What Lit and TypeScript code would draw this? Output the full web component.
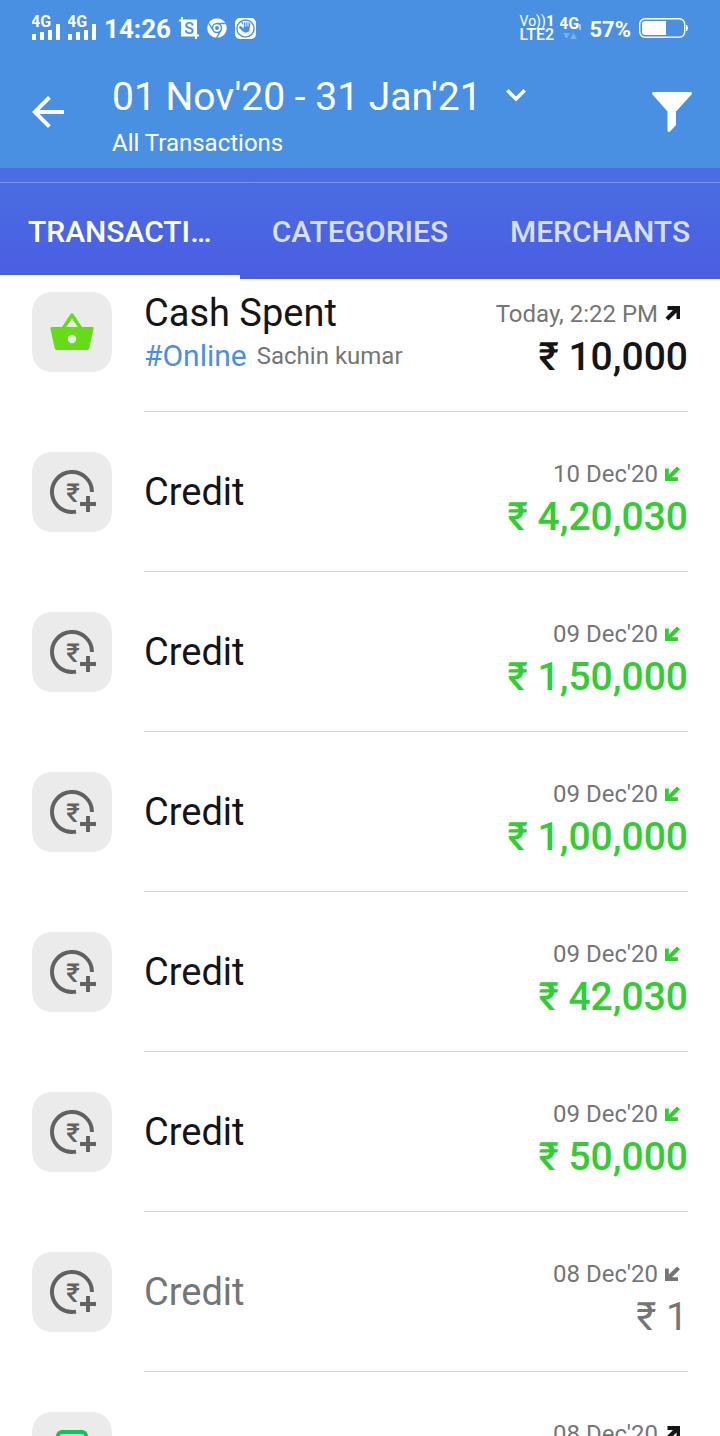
import { LitElement, html, css, svg, nothing } from "lit";
import { customElement, property, state } from "lit/decorators.js";
import { classMap } from "lit/directives/class-map.js";

type Direction = "in" | "out";
type Tone = "spent" | "credit" | "muted";
type Glyph = "basket" | "credit" | "card";

interface Transaction {
  icon: Glyph;
  title?: string;
  tag?: string;
  person?: string;
  date: string;
  amount?: string;
  direction: Direction;
  tone: Tone;
}

const TRANSACTIONS: Transaction[] = [
  { icon: "basket", title: "Cash Spent", tag: "#Online", person: "Sachin kumar", date: "Today, 2:22 PM", amount: "₹ 10,000", direction: "out", tone: "spent" },
  { icon: "credit", title: "Credit", date: "10 Dec'20", amount: "₹ 4,20,030", direction: "in", tone: "credit" },
  { icon: "credit", title: "Credit", date: "09 Dec'20", amount: "₹ 1,50,000", direction: "in", tone: "credit" },
  { icon: "credit", title: "Credit", date: "09 Dec'20", amount: "₹ 1,00,000", direction: "in", tone: "credit" },
  { icon: "credit", title: "Credit", date: "09 Dec'20", amount: "₹ 42,030", direction: "in", tone: "credit" },
  { icon: "credit", title: "Credit", date: "09 Dec'20", amount: "₹ 50,000", direction: "in", tone: "credit" },
  { icon: "credit", title: "Credit", date: "08 Dec'20", amount: "₹ 1", direction: "in", tone: "muted" },
  { icon: "card", date: "08 Dec'20", direction: "out", tone: "spent" },
];

const GLYPHS = {
  basket: svg`
    <path fill="#64dd17" fill-rule="evenodd" d="M19.5 35H30L38.4 22.2Q40 20.2 41.6 22.2L50 35H60.5Q62 35 61.6 36.6L57.4 56Q56.8 58 55 58H25Q23.2 58 22.6 56L18.4 36.6Q18 35 19.5 35ZM34.2 35H45.8L40 26.4ZM40 42.8A4.2 4.2 0 1 0 40 51.2A4.2 4.2 0 1 0 40 42.8Z"/>`,
  credit: svg`
    <path fill="none" stroke="#616161" stroke-width="4" d="M60 40A20 20 0 1 0 44 59.6"/>
    <path fill="none" stroke="#616161" stroke-width="4" d="M56 44V60M48 52H64"/>
    <text x="41" y="50" fill="#616161" font-family="Roboto, sans-serif" font-weight="500" font-size="26" text-anchor="middle">₹</text>`,
  card: svg`
    <rect x="26" y="20" width="28" height="44" rx="4" fill="#b9f0cc" stroke="#0fc556" stroke-width="4"/>`,
};

@customElement("status-bar")
class StatusBar extends LitElement {
  static styles = css`
    :host { display: flex; justify-content: space-between; align-items: center; height: 56px; padding: 0 32px; color: #fff; }
    .side { display: flex; align-items: center; gap: 8px; }
    .right { gap: 6px; }
    .time { font-size: 26px; font-weight: 700; line-height: 32px; padding-top: 2px; }
    .level { font-size: 22px; font-weight: 700; line-height: 28px; padding: 4px 2px 0; }
    svg { display: block; flex: none; }
    .volte { display: flex; flex-direction: column; font-size: 16px; line-height: 13px; font-weight: 500; }
    .vo { display: flex; justify-content: space-between; align-items: center; font-weight: 400; font-size: 14px; }
    .one { font-weight: 700; font-size: 15px; }
    .sim { font-size: 16px; font-weight: 700; }
    .crop { font-size: 16px; font-weight: 500; }
  `;

  private signal() {
    return html`<svg width="28" height="34" viewBox="0 -4 28 34" aria-hidden="true">
      <text class="sim" x="-1" y="12" fill="#fff">4G</text>
      <path fill="#fff" d="M0 19h4v6H0zM8 17h4v8H8zM16 15h4v10h-4zM24 9h4v16h-4z"/>
    </svg>`;
  }

  render() {
    return html`
      <div class="side left">
        ${this.signal()}${this.signal()}
        <span class="time">14:26</span>
        <svg width="20" height="22" viewBox="0 0 20 22" aria-hidden="true">
          <path fill="none" stroke="#fff" stroke-width="2" d="M0 3.5H17V22M3 0V18.5H20"/>
          <path fill="#fff" d="M3 3h14v15.500H3z"/>
          <text class="crop" x="10" y="16.500" fill="#4a90e2" text-anchor="middle">S</text>
        </svg>
        <svg width="20" height="20" viewBox="0 0 20 20" aria-hidden="true">
          <circle cx="10" cy="10" r="9.800" fill="#fff"/>
          <g fill="none" stroke="#4a90e2" stroke-width="1.400">
            <circle cx="10" cy="10" r="4.500"/>
            <path d="M10 5.500H19M6.100 12.200L1.600 5.200M13.900 12.200L9.600 20"/>
          </g>
          <circle cx="10" cy="10" r="2" fill="#4a90e2"/>
        </svg>
        <svg width="21" height="21" viewBox="0 0 22 22" aria-hidden="true">
          <rect width="22" height="22" rx="5" fill="#fff"/>
          <circle cx="11" cy="11" r="9" fill="none" stroke="#4a90e2" stroke-width="1.500"/>
          <path fill="#4a90e2" d="M4 10L8 14Q11 17 15 14L16 6L14.500 4.500L6 4.500Q10 8 9 11L6 8Z"/>
          <path fill="none" stroke="#fff" d="M9 4V9M11.300 4V9M13.600 4V9"/>
        </svg>
      </div>
      <div class="side right">
        <div class="volte">
          <span class="vo"><span>Vo))</span><span class="one">1</span></span>
          <span>LTE2</span>
        </div>
        <svg width="21" height="34" viewBox="0 -4 21 34" aria-hidden="true">
          <text class="sim" x="-1" y="14" fill="#fff">4G</text>
          <path stroke="#fff" fill="none" d="M18.500 10.500L20 9.500V15"/>
          <path fill="#77b0f0" d="M3 18h7l-3.500 6zM10 24h7l-3.500-6z"/>
        </svg>
        <span class="level">57%</span>
        <svg width="49" height="20" viewBox="0 0 49 20" aria-hidden="true">
          <rect x=".7" y=".7" width="45" height="18.600" rx="5.500" fill="none" stroke="#fff" stroke-width="1.400"/>
          <path fill="#fff" d="M27 3V17H6Q3 17 3 14V6Q3 3 6 3ZM47 6.500Q49 7 49 10T47 13.500Z"/>
        </svg>
      </div>
    `;
  }
}

@customElement("transaction-row")
class TransactionRow extends LitElement {
  @property({ attribute: false }) item!: Transaction;

  static styles = css`
    :host { display: grid; grid-template-columns: 80px 1fr; column-gap: 32px; padding: 0 32px; }
    .avatar { display: block; width: 80px; height: 80px; margin-top: 40px; border-radius: 20px; background: #ebebeb; }
    .body { display: flex; justify-content: space-between; box-sizing: border-box; height: 160px; padding-top: 40px; border-bottom: 1px solid #d4d4d4; }
    .about { display: flex; flex-direction: column; justify-content: safe center; height: 80px; }
    .title { margin: 0; font-size: 38px; line-height: 42px; font-weight: 400; color: #151515; }
    .meta { display: flex; align-items: center; gap: 10px; font-size: 24px; line-height: 44px; color: #757575; }
    .tag { font-size: 30px; color: #4a90e2; text-decoration: none; }
    .sum { display: flex; flex-direction: column; align-items: flex-end; }
    .when { display: flex; align-items: center; gap: 7px; padding-right: 7px; font-size: 24px; line-height: 44px; color: #757575; }
    .arrow { display: block; color: #151515; }
    .amount { font-size: 39px; line-height: 42px; font-weight: 500; color: #151515; }
    .credit .arrow, .credit .amount { color: #32cd32; }
    .muted .arrow, .muted .amount, .muted .title { color: #757575; }
    .muted .amount { font-weight: 400; }
  `;

  render() {
    const t = this.item;
    const d = t.direction === "out"
      ? "M2.500 0H15V13H11.500V6.500L3.500 14.500L.5 11.500L8 4H2.500Z"
      : "M13 15H0V2.500H3.800V8.500L12 .5L15 3.300L7 11.200H13Z";
    return html`
      <svg class="avatar" viewBox="0 0 80 80" aria-hidden="true">${GLYPHS[t.icon]}</svg>
      <div class=${classMap({ body: true, [t.tone]: true })}>
        <div class="about">
          ${t.title ? html`<h2 class="title">${t.title}</h2>` : nothing}
          ${t.tag ? html`<div class="meta"><a class="tag" href="#online">${t.tag}</a><span>${t.person}</span></div>` : nothing}
        </div>
        <div class="sum">
          <div class="when">
            <span>${t.date}</span>
            <svg class="arrow" width="16" height="16" viewBox="0 0 16 16" aria-hidden="true"><path fill="currentColor" d=${d}/></svg>
          </div>
          ${t.amount ? html`<div class="amount">${t.amount}</div>` : nothing}
        </div>
      </div>
    `;
  }
}

@customElement("app-root")
class AppRoot extends LitElement {
  @state() private active = 0;
  private tabs = ["TRANSACTIONS", "CATEGORIES", "MERCHANTS"];

  static styles = css`
    :host { display: flex; flex-direction: column; height: 100vh; overflow: hidden; background: #fff; font-family: Roboto, sans-serif; }
    button { margin: 0; padding: 0; border: 0; background: none; color: inherit; font: inherit; text-align: left; cursor: pointer; }
    svg { display: block; }
    .top { background: #4a90e2; color: #fff; }
    .bar { display: flex; align-items: center; height: 112px; padding: 0 28px 0 24px; }
    .heading { flex: 1; margin-left: 40px; padding-top: 6px; }
    .range { display: flex; align-items: center; gap: 24px; font-size: 39px; line-height: 48px; }
    .title { margin: 0; font: inherit; }
    .range svg { margin-bottom: 4px; }
    .scope { margin: 0; padding-top: 8px; font-size: 24px; line-height: 28px; }
    .nav { flex: none; background: linear-gradient(#4a6ee2, #4a5ee2); color: #fff; padding-top: 14px; }
    .tabs { display: grid; grid-template-columns: repeat(3, 1fr); border-top: 1px solid #7f96ea; }
    .tab { min-width: 0; padding: 29px 28px 23px; border-bottom: 4px solid transparent; font-size: 30px; line-height: 40px; font-weight: 500; text-align: center; color: #d9dffa; }
    .tab.active { border-bottom-color: #fff; color: #fff; }
    .label { display: block; overflow: hidden; text-overflow: ellipsis; white-space: nowrap; }
    .view { flex: 1; min-height: 0; overflow: hidden; }
    .list { list-style: none; margin: -27px 0 0; padding: 0; }
  `;

  render() {
    return html`
      <header class="top">
        <status-bar></status-bar>
        <div class="bar">
          <button aria-label="Back">
            <svg width="48" height="48" viewBox="0 0 24 24"><path fill="#fff" d="M20 11H7.830l5.590-5.590L12 4l-8 8 8 8 1.410-1.410L7.830 13H20v-2z"/></svg>
          </button>
          <div class="heading">
            <button class="range" aria-haspopup="dialog">
              <h1 class="title">01 Nov'20 - 31 Jan'21</h1>
              <svg width="20" height="13" viewBox="0 0 20 13" aria-hidden="true"><path fill="none" stroke="#fff" stroke-width="3.400" d="M1.300 1.300L10 10L18.700 1.300"/></svg>
            </button>
            <p class="scope">All Transactions</p>
          </div>
          <button aria-label="Filter">
            <svg width="40" height="40" viewBox="0 0 40 40"><path fill="#fff" d="M1 0H39Q40.500 .8 39.500 2.500L24 19.500V33L18 39.500Q16.500 40.500 15.500 39V19.500L.5 2.500Q-.5 .8 1 0Z"/></svg>
          </button>
        </div>
      </header>
      <nav class="nav">
        <div class="tabs" role="tablist">
          ${this.tabs.map((name, i) => html`
            <button role="tab" aria-selected=${i === this.active} class=${classMap({ tab: true, active: i === this.active })} @click=${() => (this.active = i)}>
              <span class="label">${name}</span>
            </button>`)}
        </div>
      </nav>
      <main class="view">
        <ul class="list">
          ${TRANSACTIONS.map((item) => html`<li><transaction-row .item=${item}></transaction-row></li>`)}
        </ul>
      </main>
    `;
  }
}
